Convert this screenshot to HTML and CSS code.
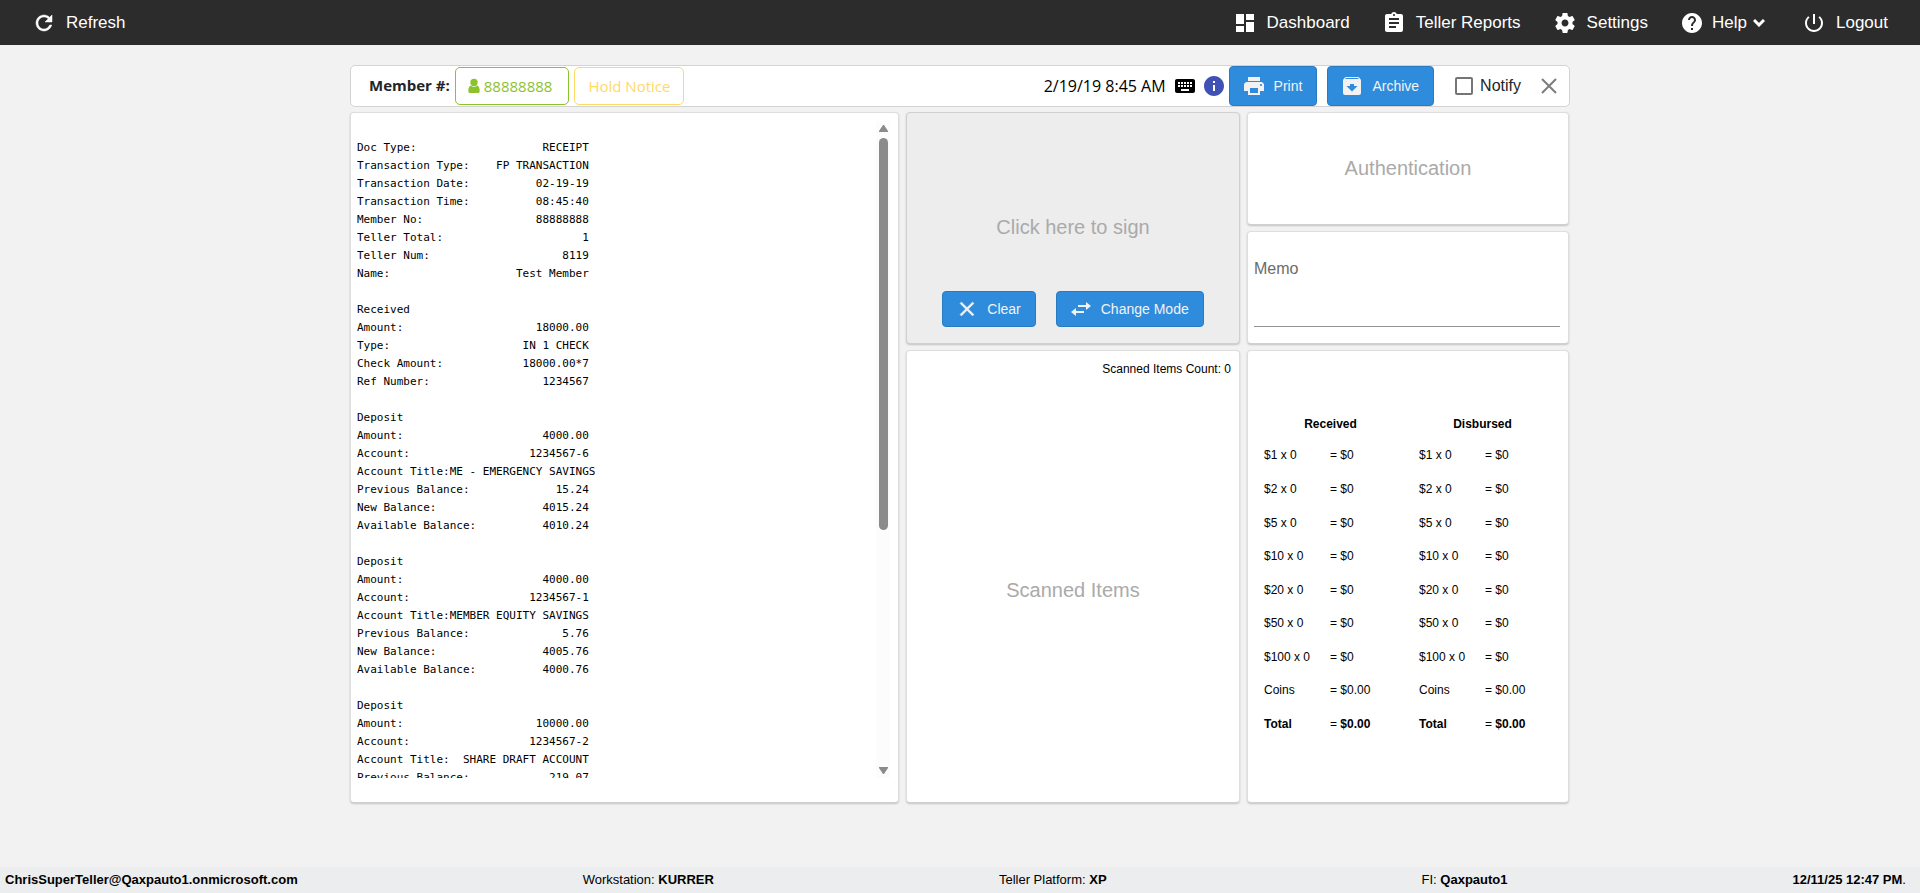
FILE: index.html
```html
<!DOCTYPE html>
<html lang="en">
<head>
    <meta charset="UTF-8">
    <meta name="viewport" content="width=device-width, initial-scale=1.0">
    <title>Teller Receipt</title>
    <link rel="stylesheet" href="styles.css">
</head>
<body>
    <nav class="topbar">
        <a href="#" class="nav-link">
            <svg class="icon" viewBox="0 0 24 24"><path d="M17.65 6.35C16.2 4.9 14.21 4 12 4c-4.42 0-7.99 3.58-7.99 8s3.57 8 7.99 8c3.73 0 6.84-2.55 7.73-6h-2.08c-.82 2.33-3.04 4-5.65 4-3.31 0-6-2.69-6-6s2.69-6 6-6c1.66 0 3.14.69 4.22 1.78L13 11h7V4l-2.35 2.35z" stroke="currentColor" stroke-width=".5"/></svg>
            Refresh
        </a>
        <div class="nav-right">
            <a href="#" class="nav-link">
                <svg class="icon" viewBox="0 0 24 24"><path d="M3 13h8V3H3v10zm0 8h8v-6H3v6zm10 0h8V11h-8v10zm0-18v6h8V3h-8z"/></svg>
                Dashboard
            </a>
            <a href="#" class="nav-link">
                <svg class="icon" viewBox="0 0 24 24"><path d="M19 3h-4.18C14.4 1.84 13.3 1 12 1c-1.3 0-2.4.84-2.82 2H5c-1.1 0-2 .9-2 2v14c0 1.1.9 2 2 2h14c1.1 0 2-.9 2-2V5c0-1.1-.9-2-2-2zm-7 0c.55 0 1 .45 1 1s-.45 1-1 1-1-.45-1-1 .45-1 1-1zm2 14H7v-2h7v2zm3-4H7v-2h10v2zm0-4H7V7h10v2z"/></svg>
                Teller Reports
            </a>
            <a href="#" class="nav-link">
                <svg class="icon" viewBox="0 0 24 24"><path d="M19.43 12.98c.04-.32.07-.64.07-.98s-.03-.66-.07-.98l2.11-1.65c.19-.15.24-.42.12-.64l-2-3.46c-.12-.22-.39-.3-.61-.22l-2.49 1c-.52-.4-1.08-.73-1.69-.98l-.38-2.65C14.46 2.18 14.25 2 14 2h-4c-.25 0-.46.18-.49.42l-.38 2.65c-.61.25-1.17.59-1.69.98l-2.49-1c-.23-.09-.49 0-.61.22l-2 3.46c-.13.22-.07.49.12.64l2.11 1.65c-.04.32-.07.65-.07.98s.03.66.07.98l-2.11 1.65c-.19.15-.24.42-.12.64l2 3.46c.12.22.39.3.61.22l2.49-1c.52.4 1.08.73 1.69.98l.38 2.65c.03.24.24.42.49.42h4c.25 0 .46-.18.49-.42l.38-2.65c.61-.25 1.17-.59 1.69-.98l2.49 1c.23.09.49 0 .61-.22l2-3.46c.12-.22.07-.49-.12-.64l-2.11-1.65zM12 15.5c-1.93 0-3.5-1.57-3.5-3.5s1.57-3.5 3.5-3.5 3.5 1.57 3.5 3.5-1.57 3.5-3.5 3.5z"/></svg>
                Settings
            </a>
            <a href="#" class="nav-link nav-help">
                <svg class="icon" viewBox="0 0 24 24"><path d="M12 2C6.48 2 2 6.48 2 12s4.48 10 10 10 10-4.48 10-10S17.52 2 12 2zm1 17h-2v-2h2v2zm2.07-7.75l-.9.92C13.45 12.9 13 13.5 13 15h-2v-.5c0-1.1.45-2.1 1.17-2.83l1.24-1.26c.37-.36.59-.86.59-1.41 0-1.1-.9-2-2-2s-2 .9-2 2H8c0-2.21 1.79-4 4-4s4 1.79 4 4c0 .88-.36 1.68-.93 2.25z"/></svg>
                Help
                <svg class="chevron" viewBox="0 0 12 8"><path d="M1 1l5 5 5-5"/></svg>
            </a>
            <a href="#" class="nav-link">
                <svg class="icon" viewBox="0 0 24 24"><path d="M13 3h-2v10h2V3zm4.83 2.17l-1.42 1.42C17.99 7.86 19 9.81 19 12c0 3.87-3.13 7-7 7s-7-3.13-7-7c0-2.19 1.01-4.14 2.58-5.42L6.17 5.17C4.23 6.82 3 9.26 3 12c0 4.97 4.03 9 9 9s9-4.03 9-9c0-2.74-1.23-5.18-3.17-6.83z"/></svg>
                Logout
            </a>
        </div>
    </nav>

    <main class="content">
        <div class="member-bar">
            <span class="member-label">Member #:</span>
            <button type="button" class="tag tag-member">
                <svg class="person" viewBox="0 0 12 16"><circle cx="6" cy="4.5" r="3.7"/><path d="M2.6 7.5C.8 8.500.3 10.500.3 13c0 1.400.8 2 2 2h7.400c1.200 0 2-.6 2-2 0-2.500-.5-4.500-2.300-5.500-1.900 1.900-4.900 1.900-6.800 0z"/></svg>
                88888888
            </button>
            <button type="button" class="tag tag-hold">Hold Notice</button>
            <span class="date">2/19/19 8:45 AM</span>
            <svg class="keyboard" viewBox="2 5 20 14"><path d="M20 5H4c-1.1 0-1.99.9-1.99 2L2 17c0 1.1.9 2 2 2h16c1.1 0 2-.9 2-2V7c0-1.1-.9-2-2-2zm-9 3h2v2h-2V8zm0 3h2v2h-2v-2zM8 8h2v2H8V8zm0 3h2v2H8v-2zm-1 2H5v-2h2v2zm0-3H5V8h2v2zm9 7H8v-2h8v2zm0-4h-2v-2h2v2zm0-3h-2V8h2v2zm3 3h-2v-2h2v2zm0-3h-2V8h2v2z"/></svg>
            <svg class="info" viewBox="2 2 20 20"><path d="M12 2C6.48 2 2 6.48 2 12s4.48 10 10 10 10-4.48 10-10S17.52 2 12 2zm1 15h-2v-6h2v6zm0-8h-2V7h2v2z"/></svg>
            <button type="button" class="btn btn-bar">
                <svg class="icon" viewBox="0 0 24 24"><path d="M19 8H5c-1.66 0-3 1.34-3 3v6h4v4h12v-4h4v-6c0-1.66-1.34-3-3-3zm-3 11H8v-5h8v5zm3-7c-.55 0-1-.45-1-1s.45-1 1-1 1 .45 1 1-.45 1-1 1zm-1-9H6v4h12V3z"/></svg>
                Print
            </button>
            <button type="button" class="btn btn-bar">
                <svg class="icon" viewBox="0 0 24 24"><path d="M20.54 5.23l-1.39-1.68C18.88 3.21 18.47 3 18 3H6c-.47 0-.88.21-1.16.55L3.46 5.23C3.17 5.57 3 6.02 3 6.5V19c0 1.1.9 2 2 2h14c1.1 0 2-.9 2-2V6.5c0-.48-.17-.93-.46-1.27zM12 17.5L6.5 12H10v-2h4v2h3.5L12 17.5zM5.12 5l.81-1h12l.94 1H5.12z"/></svg>
                Archive
            </button>
            <label class="notify" for="notify">
                <input type="checkbox" id="notify" name="notify">
                Notify
            </label>
            <button type="button" class="close" aria-label="Close">
                <svg viewBox="0 0 16 16"><path d="M1 1l14 14M15 1L1 15"/></svg>
            </button>
        </div>

        <div class="panels">
            <section class="card receipt">
                <pre class="receipt-text">

Doc Type:                   RECEIPT
Transaction Type:    FP TRANSACTION
Transaction Date:          02-19-19
Transaction Time:          08:45:40
Member No:                 88888888
Teller Total:                     1
Teller Num:                    8119
Name:                   Test Member

Received
Amount:                    18000.00
Type:                    IN 1 CHECK
Check Amount:            18000.00*7
Ref Number:                 1234567

Deposit
Amount:                     4000.00
Account:                  1234567-6
Account Title:ME - EMERGENCY SAVINGS
Previous Balance:             15.24
New Balance:                4015.24
Available Balance:          4010.24

Deposit
Amount:                     4000.00
Account:                  1234567-1
Account Title:MEMBER EQUITY SAVINGS
Previous Balance:              5.76
New Balance:                4005.76
Available Balance:          4000.76

Deposit
Amount:                    10000.00
Account:                  1234567-2
Account Title:  SHARE DRAFT ACCOUNT
Previous Balance:            219.07
</pre>
                <div class="scrollbar">
                    <svg class="arrow" viewBox="0 0 9 7"><path d="M4 0h1l4 6v1H0V6z"/></svg>
                    <div class="track"><div class="thumb"></div></div>
                    <svg class="arrow" viewBox="0 0 9 7"><path d="M4 7h1l4-6V0H0v1z"/></svg>
                </div>
            </section>

            <div class="column">
                <section class="card sign">
                    <h2 class="card-title">Click here to sign</h2>
                    <div class="sign-buttons">
                        <button type="button" class="btn">
                            <svg class="icon" viewBox="0 0 24 24"><path d="M19 6.4L17.6 5 12 10.600 6.400 5 5 6.400 10.600 12 5 17.600 6.400 19 12 13.400 17.600 19 19 17.600 13.400 12z" stroke="currentColor" stroke-width=".4"/></svg>
                            Clear
                        </button>
                        <button type="button" class="btn">
                            <svg class="icon" viewBox="0 0 24 24"><path d="M17 5l5 4-5 4v-3H9V8h8zM7 11v3h8v2H7v3l-5-4z"/></svg>
                            Change Mode
                        </button>
                    </div>
                </section>
                <section class="card scanned">
                    <p class="scanned-count">Scanned Items Count: 0</p>
                    <h2 class="card-title">Scanned Items</h2>
                </section>
            </div>

            <div class="column">
                <section class="card auth">
                    <h2 class="card-title">Authentication</h2>
                </section>
                <section class="card memo">
                    <label for="memo">Memo</label>
                    <input type="text" id="memo" name="memo">
                </section>
                <section class="card cash">
                    <table class="cash-table">
                        <colgroup>
                            <col class="col-count">
                            <col class="col-amount">
                            <col class="col-count">
                            <col>
                        </colgroup>
                        <tr class="cash-head"><th colspan="2">Received</th><th colspan="2">Disbursed</th></tr>
                        <tr><td>$1 x 0</td><td>= $0</td><td>$1 x 0</td><td>= $0</td></tr>
                        <tr><td>$2 x 0</td><td>= $0</td><td>$2 x 0</td><td>= $0</td></tr>
                        <tr><td>$5 x 0</td><td>= $0</td><td>$5 x 0</td><td>= $0</td></tr>
                        <tr><td>$10 x 0</td><td>= $0</td><td>$10 x 0</td><td>= $0</td></tr>
                        <tr><td>$20 x 0</td><td>= $0</td><td>$20 x 0</td><td>= $0</td></tr>
                        <tr><td>$50 x 0</td><td>= $0</td><td>$50 x 0</td><td>= $0</td></tr>
                        <tr><td>$100 x 0</td><td>= $0</td><td>$100 x 0</td><td>= $0</td></tr>
                        <tr><td>Coins</td><td>= $0.00</td><td>Coins</td><td>= $0.00</td></tr>
                        <tr><td><b>Total</b></td><td>= <b>$0.00</b></td><td><b>Total</b></td><td>= <b>$0.00</b></td></tr>
                    </table>
                </section>
            </div>
        </div>
    </main>

    <footer class="statusbar">
        <b>ChrisSuperTeller@Qaxpauto1.onmicrosoft.com</b>
        <span>Workstation: <b>KURRER</b></span>
        <span>Teller Platform: <b>XP</b></span>
        <span class="fi">FI: <b>Qaxpauto1</b></span>
        <span><b>12/11/25 12:47 PM</b>.</span>
    </footer>
</body>
</html>
```

FILE: styles.css
```css
* {
    box-sizing: border-box;
}

body {
    margin: 0;
    min-height: 100vh;
    display: flex;
    flex-direction: column;
    font-family: "Liberation Sans", Arial, sans-serif;
    font-size: 12px;
    color: #000;
    background-color: #f2f2f2;
}

button,
input {
    font-family: inherit;
}

/* top navigation */
.topbar {
    display: flex;
    justify-content: space-between;
    align-items: center;
    height: 45px;
    padding: 0 32px;
    background-color: #2c2c2c;
}

.nav-right {
    display: flex;
    gap: 32px;
}

.nav-link {
    display: flex;
    align-items: center;
    gap: 10px;
    color: #fff;
    font-size: 17px;
    text-decoration: none;
}

.icon {
    width: 24px;
    height: 24px;
    fill: currentColor;
}

.nav-help {
    gap: 8px;
    margin-right: 5px;
}

.nav-help .chevron {
    margin-left: -2px;
}

.chevron {
    width: 12px;
    height: 8px;
    fill: none;
    stroke: currentColor;
    stroke-width: 3;
}

/* member bar */
.content {
    flex: 1;
    width: 1220px;
    max-width: 100%;
    margin: 20px auto 0;
}

.member-bar {
    display: flex;
    align-items: center;
    height: 42px;
    padding: 0 9px 0 18px;
    background-color: #fff;
    border: 1px solid #d3d3d3;
    border-radius: 5px;
}

.member-label {
    margin-right: 5px;
    padding-bottom: 2px;
    font-family: "Open Sans", sans-serif;
    font-size: 15px;
    font-weight: bold;
    color: #212529;
}

.tag {
    display: flex;
    align-items: center;
    gap: 4px;
    height: 38px;
    margin-right: 5px;
    padding: 0 13px;
    background-color: #fff;
    border: 1px solid;
    border-radius: 5px;
    font-family: "Open Sans", sans-serif;
    font-size: 15px;
}

.tag-member {
    padding: 0 16px 0 12px;
    color: #8dc22f;
}

.tag-hold {
    color: #ffd966;
}

.person {
    width: 12px;
    height: 16px;
    fill: currentColor;
}

.date {
    margin-left: auto;
    font-family: "Open Sans", sans-serif;
    font-size: 16px;
}

.keyboard {
    width: 20px;
    height: 14px;
    margin: 0 9px;
}

.info {
    width: 20px;
    height: 20px;
    margin-right: 5px;
    fill: #3f51b5;
}

.btn {
    display: flex;
    align-items: center;
    gap: 8px;
    height: 36px;
    padding: 0 14px 0 12px;
    background-color: #2f8cdc;
    border: 1px solid #297bc1;
    border-radius: 4px;
    color: #f2f2f2;
    font-size: 14px;
}

.btn-bar {
    height: 40px;
    margin-right: 10px;
}

.notify {
    display: flex;
    align-items: center;
    gap: 7px;
    margin: 0 17px 0 11px;
    font-size: 16px;
    color: #212529;
}

.notify input {
    appearance: none;
    width: 18px;
    height: 18px;
    margin: 0;
    border: 2px solid #757575;
    border-radius: 2px;
}

.close {
    display: flex;
    padding: 3px;
    background: none;
    border: none;
}

.close svg {
    width: 16px;
    height: 16px;
    stroke: #7d7d7d;
    stroke-width: 2;
}

/* panels */
.panels {
    display: grid;
    grid-template-columns: 549fr 334fr 322fr;
    gap: 7px;
    margin-top: 5px;
    padding-right: 1px;
}

.column {
    display: flex;
    flex-direction: column;
    gap: 6px;
}

.card {
    background-color: #fff;
    border: 1px solid #dedede;
    border-bottom-color: #d0d0d0;
    border-radius: 4px;
    box-shadow: 0 1px 2px rgba(0, 0, 0, 0.2);
}

.card-title {
    margin: 0;
    font-size: 20px;
    font-weight: normal;
    color: #aaa;
}

.receipt {
    display: flex;
    justify-content: space-between;
    height: 691px;
    padding: 8px 8px 24px 6px;
}

.receipt-text {
    margin: 0;
    overflow-y: auto;
    scrollbar-width: none;
    font-family: "DejaVu Sans Mono", monospace;
    font-size: 11px;
    line-height: 18px;
}

.scrollbar {
    display: flex;
    flex-direction: column;
    align-items: center;
    gap: 6px;
    width: 14px;
    padding: 4px 0;
    background-color: #fcfcfc;
}

.arrow {
    width: 9px;
    height: 7px;
    fill: #8b8b8b;
}

.track {
    flex: 1;
}

.thumb {
    width: 9px;
    height: 63%;
    border-radius: 5px;
    background-color: #8b8b8b;
}

.sign {
    display: flex;
    flex-direction: column;
    justify-content: flex-end;
    align-items: center;
    gap: 52px;
    height: 232px;
    padding-bottom: 16px;
    background-color: #ededed;
    border-color: #d0d0d0;
}

.sign-buttons {
    display: flex;
    gap: 20px;
}

.scanned {
    display: flex;
    flex-direction: column;
    align-items: center;
    gap: 203px;
    height: 453px;
    padding: 11px 8px;
}

.scanned-count {
    align-self: flex-end;
    margin: 0;
}

.auth {
    display: flex;
    justify-content: center;
    align-items: center;
    height: 113px;
}

.memo {
    height: 113px;
    padding: 28px 8px 0 6px;
}

.memo label {
    display: block;
    font-size: 16px;
    color: #6b6b6b;
}

.memo input {
    display: block;
    width: 100%;
    height: 49px;
    padding: 0;
    border: none;
    border-bottom: 1px solid #949494;
    background: none;
    font-size: 16px;
}

.cash {
    height: 453px;
    padding: 59px 0 0 16px;
}

.cash-table {
    width: 100%;
    height: 331px;
    table-layout: fixed;
    border-collapse: collapse;
}

.col-count {
    width: 66px;
}

.col-amount {
    width: 89px;
}

.cash-table tr {
    height: 33px;
}

.cash-table .cash-head {
    height: 28px;
}

.cash-table th,
.cash-table td {
    padding: 0;
    text-align: left;
}

.cash-table th {
    padding-right: 22px;
    text-align: center;
}

/* status bar */
.statusbar {
    display: flex;
    justify-content: space-between;
    align-items: center;
    height: 26px;
    padding: 0 14px 2px 5px;
    background-color: #ebedef;
    font-size: 13px;
}

.fi {
    padding-left: 30px;
}
```
